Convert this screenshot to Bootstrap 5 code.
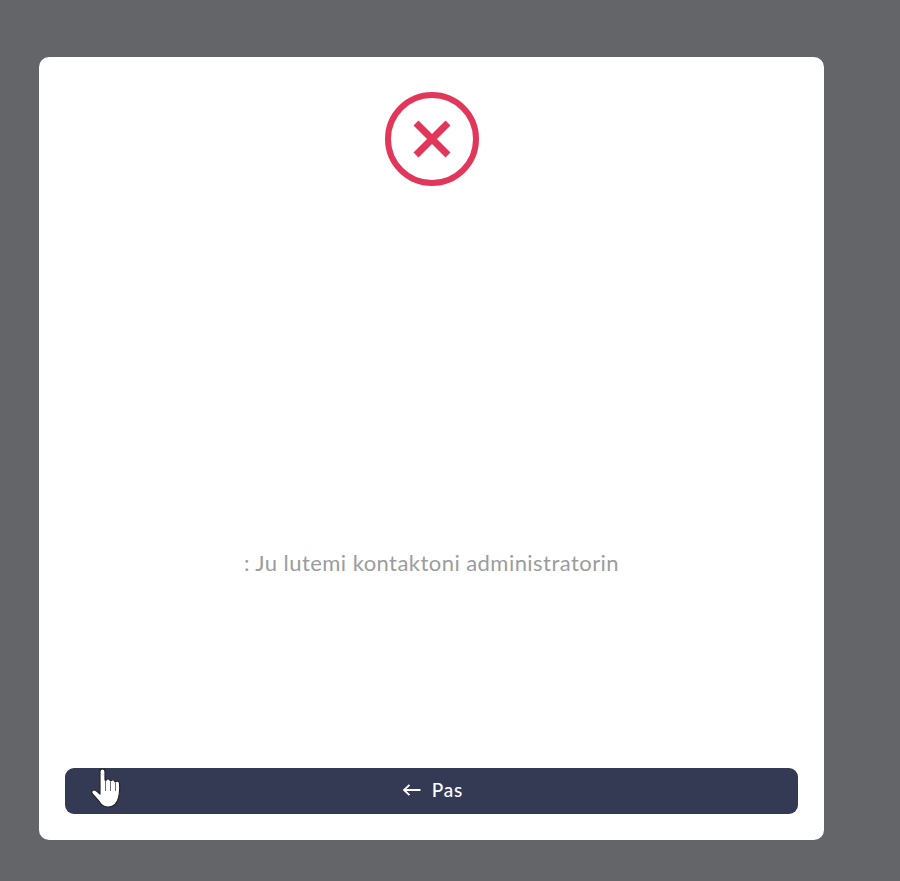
<!DOCTYPE html>
<html lang="sq">
<head>
<meta charset="utf-8">
<title>Gabim</title>
<link href="https://cdn.jsdelivr.net/npm/bootstrap@5.3.0/dist/css/bootstrap.min.css" rel="stylesheet">
<style>
html,body{height:100%;}
body{background:#636569;font-family:"Lato","Liberation Sans",sans-serif;overflow:hidden;}
.stage{padding:57px 76px 41px 39px;height:881px;}
.dialog{height:783px;width:785px;background:#fff;border-radius:10px;padding:35px 26px 26px;position:relative;}
.err-icon{width:94px;height:94px;display:block;}
.msg-wrap{flex:1 1 auto;padding-top:172px;}
.msg{color:#9a9c9f;font-size:22px;line-height:28px;letter-spacing:.45px;margin:0;}
.back-btn{background:#343954;color:#fff;border:0;border-radius:9px;height:46px;font-size:19px;font-weight:500;letter-spacing:.8px;width:100%;padding:0 0 2px 2px;column-gap:10px;}
.back-btn:hover{background:#343954;color:#fff;}
.hand{position:absolute;left:52px;top:711px;width:30px;height:41px;}
</style>
</head>
<body>
<div class="stage">
  <div class="dialog d-flex flex-column align-items-center">
    <svg class="err-icon" viewBox="0 0 94 94" aria-hidden="true">
      <circle cx="47" cy="47" r="44" fill="none" stroke="#e2375a" stroke-width="6"/>
      <path d="M31 31 L63 63 M63 31 L31 63" fill="none" stroke="#e2375a" stroke-width="7"/>
    </svg>
    <div class="msg-wrap d-flex align-items-center justify-content-center">
      <p class="msg text-center">: Ju lutemi kontaktoni administratorin</p>
    </div>
    <button type="button" class="btn back-btn d-flex align-items-center justify-content-center">
      <svg width="20" height="14" viewBox="0 0 20 14" aria-hidden="true"><path d="M18.500 7H2M7.500 1.800 2 7l5.500 5.200" fill="none" stroke="#fff" stroke-width="1.800"/></svg>
      <span>Pas</span>
    </button>
    <svg class="hand" viewBox="0 0 30 41" aria-hidden="true">
      <path d="M9 3.500c0-3.500 5-3.500 5 0V12l1 .5c.3-2 3.700-2 4 0l.8.5c.5-1.800 3.700-1.500 4 .5l.7.500c.8-1.500 3.800-1 4 1.500.4 5 .2 10-1 14.500-1.300 5-4.500 9-10 9-4 0-7-1.500-9-5L1.500 26c-2-2.500.5-5.500 3.500-3.500l4 3.500V3.500z" fill="#fff" stroke="#23262f" stroke-width="1.200" stroke-linejoin="round"/>
      <path d="M14.500 13v10M19.500 14v9M24.500 15v8" stroke="#6d6f76" stroke-width="1" fill="none"/>
    </svg>
  </div>
</div>
<script src="https://cdn.jsdelivr.net/npm/bootstrap@5.3.0/dist/js/bootstrap.bundle.min.js"></script>
</body>
</html>
